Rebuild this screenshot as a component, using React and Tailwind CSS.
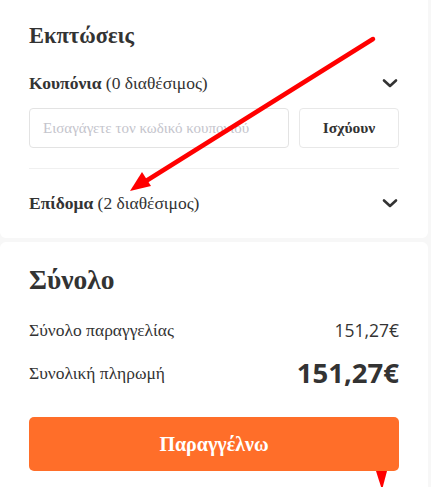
export default function App() {
  const serif = { fontFamily: '"Liberation Serif", "Times New Roman", serif' }
  const sans = { fontFamily: '"Open Sans", "Noto Sans", sans-serif' }

  const Chevron = () => (
    <svg width="18" height="12" viewBox="0 0 18 12" fill="none">
      <path d="M3 3.5l6 5.5 6-5.5" stroke="#333" strokeWidth="2.6" strokeLinecap="round" strokeLinejoin="round" />
    </svg>
  )

  return (
    <div className="relative h-[487px] w-[431px] overflow-hidden bg-[#f7f7f7] text-[#333]" style={serif}>
      <div className="flex flex-col gap-[4px] pr-[3px]">
        <div className="-mt-[1px] rounded-b-[6px] bg-white px-[29px] pb-[23px] pt-[22px]">
          <h2 className="text-[22.5px] font-bold leading-[30px]">Εκπτώσεις</h2>
          <div className="mt-[20px] flex items-center justify-between">
            <p className="text-[17.5px] leading-[24px]">
              <b>Κουπόνια</b> (0 διαθέσιμος)
            </p>
            <Chevron />
          </div>
          <div className="mt-[13px] flex gap-[10px]">
            <div className="flex h-[40px] flex-1 items-center rounded-[4px] border border-[#e3e3e3] px-[13px] text-[15px] text-[#c4c4cc]">
              Εισαγάγετε τον κωδικό κουπονιού
            </div>
            <button className="h-[40px] w-[100px] rounded-[4px] border border-[#e8e8e8] text-[15.5px] font-bold">
              Ισχύουν
            </button>
          </div>
          <div className="mt-[20px] border-t border-[#f0f0f0]" />
          <div className="mt-[22px] flex items-center justify-between">
            <p className="text-[17.5px] leading-[24px]">
              <b>Επίδομα</b> (2 διαθέσιμος)
            </p>
            <Chevron />
          </div>
        </div>

        <div className="rounded-t-[6px] bg-white px-[29px] pb-[20px] pt-[20px]">
          <h2 className="text-[27.5px] font-bold leading-[36px]">Σύνολο</h2>
          <div className="mt-[19px] flex items-center justify-between">
            <span className="text-[17.5px]">Σύνολο παραγγελίας</span>
            <span className="text-[17.5px] text-[#333]" style={sans}>151,27€</span>
          </div>
          <div className="mt-[12px] flex items-center justify-between">
            <span className="text-[17.5px]">Συνολική πληρωμή</span>
            <span className="text-[27.5px] font-bold leading-[36px]" style={sans}>151,27€</span>
          </div>
          <button className="mt-[26px] flex h-[54px] w-full items-center justify-center rounded-[5px] bg-[#ff6e29] text-[20px] font-bold text-white">
            Παραγγέλνω
          </button>
        </div>
      </div>

      <svg className="pointer-events-none absolute inset-0" width="431" height="487" viewBox="0 0 431 487">
        <line x1="373" y1="39" x2="146" y2="181" stroke="#ff0000" strokeWidth="4.5" strokeLinecap="round" />
        <polygon points="130,191 151,186 142,172" fill="#ff0000" />
        <polygon points="376,471 387,471 382,490" fill="#ff0000" />
      </svg>
    </div>
  )
}
